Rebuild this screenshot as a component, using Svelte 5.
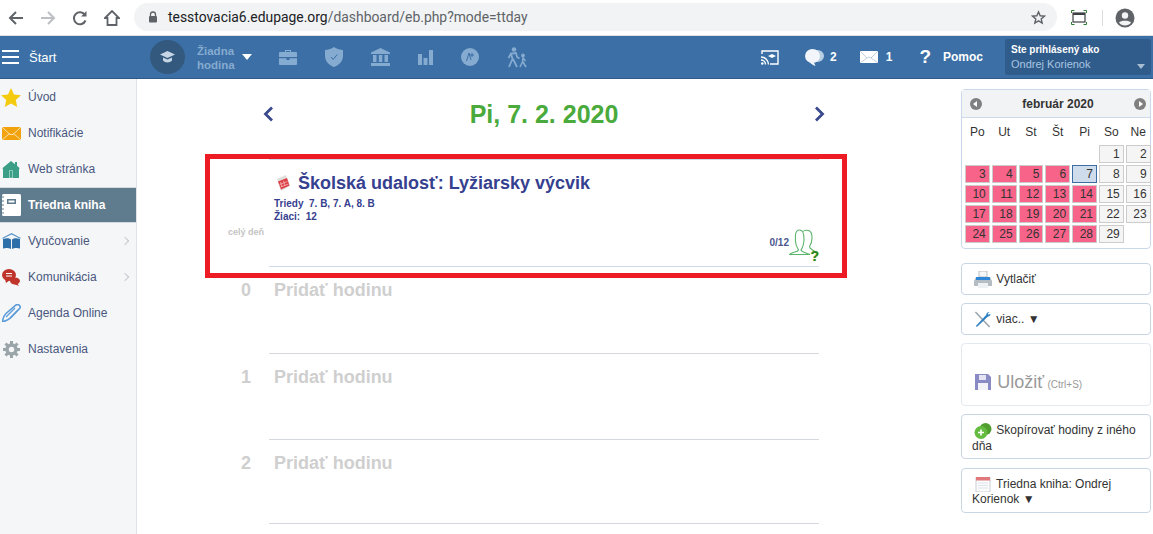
<script>
	const menu = [
		{ label: 'Úvod', icon: 'star' },
		{ label: 'Notifikácie', icon: 'mail' },
		{ label: 'Web stránka', icon: 'home' },
		{ label: 'Triedna kniha', icon: 'book', active: true },
		{ label: 'Vyučovanie', icon: 'school', more: true },
		{ label: 'Komunikácia', icon: 'chat', more: true },
		{ label: 'Agenda Online', icon: 'pen' },
		{ label: 'Nastavenia', icon: 'gear' }
	];
	const dayNames = ['Po', 'Ut', 'St', 'Št', 'Pi', 'So', 'Ne'];
	const days = Array.from({ length: 29 }, (_, i) => i + 1);
	const isWeekend = (d) => (d + 4) % 7 >= 5;
	const slots = ['0', '1', '2'];
</script>

<div class="chrome">
	<div class="nav-icons">
		<svg width="16" height="16" viewBox="0 0 16 16"><path d="M15 8H2M8 2L2 8l6 6" fill="none" stroke="#5f6368" stroke-width="2" /></svg>
		<svg width="16" height="16" viewBox="0 0 16 16"><path d="M1 8h13M8 2l6 6-6 6" fill="none" stroke="#bcbfc3" stroke-width="2" /></svg>
		<svg width="16" height="16" viewBox="0 0 16 16"><path d="M13.500 10.500A6 6 0 1 1 13 5" fill="none" stroke="#5f6368" stroke-width="2" /><path d="M14.500 1v5.500H9z" fill="#5f6368" /></svg>
		<svg width="16" height="16" viewBox="0 0 16 16"><path d="M1 8l7-7 7 7h-2.500v7h-9V8z" fill="none" stroke="#5f6368" stroke-width="1.800" /></svg>
	</div>
	<div class="omnibox">
		<svg class="lock" width="10" height="12" viewBox="0 0 10 12"><path d="M2.500 5V3.500a2.500 2.500 0 0 1 5 0V5" fill="none" stroke="#5f6368" stroke-width="1.300" /><rect x="1" y="5" width="8" height="6.500" rx="1" fill="#5f6368" /></svg>
		<span class="url"><b>tesstovacia6.edupage.org</b>/dashboard/eb.php?mode=ttday</span>
		<svg class="bookmark" width="15" height="15" viewBox="0 0 24 24"><path d="M12 3l2.700 6.200 6.700.6-5.100 4.400 1.600 6.600L12 17.300l-5.900 3.500 1.600-6.600-5.100-4.400 6.700-.6z" fill="none" stroke="#5f6368" stroke-width="2.200" /></svg>
	</div>
	<div class="chrome-end">
		<svg width="16" height="15" viewBox="0 0 16 15"><path d="M.5 3V.5h3M12.500.5h3V3M15.500 12v2.500h-3M3.500 14.500h-3V12" fill="none" stroke="#2e7d32" stroke-width="1" /><rect x="2" y="3" width="12" height="9" fill="none" stroke="#3c4043" stroke-width="1.200" /><rect x="2" y="3" width="12" height="2" fill="#3c4043" /></svg>
		<i class="sep"></i>
		<svg width="20" height="20" viewBox="0 0 20 20"><circle cx="10" cy="10" r="9.500" fill="#5f6368" /><circle cx="10" cy="7.500" r="3.200" fill="#f1f3f4" /><path d="M4 14.500c1.500-2.500 10.500-2.500 12 0-1.500 2.300-3.500 3-6 3s-4.500-.7-6-3z" fill="#f1f3f4" /></svg>
	</div>
</div>

<header class="topbar">
	<div class="start">
		<span class="burger"><i></i><i></i><i></i></span>
		<span>Štart</span>
	</div>
	<div class="lesson">
		<span class="lesson-badge">
			<svg width="15" height="12" viewBox="0 0 15 12"><path d="M7.500 0l7.500 3.500-7.500 3.500L0 3.500z" fill="#c6d6e6" /><path d="M3 6.500v3c2 2.500 7 2.500 9 0v-3L7.500 8.500z" fill="#c6d6e6" /></svg>
		</span>
		<span class="lesson-name">Žiadna<br />hodina</span>
		<span class="caret"></span>
	</div>
	<div class="tools">
		<svg width="18" height="16" viewBox="0 0 18 16"><path d="M6 3V1h6v2h5a1 1 0 0 1 1 1v4H0V4a1 1 0 0 1 1-1zM7.200 2v1h3.600V2zM0 9.200h7.500V11h3V9.200H18V15a1 1 0 0 1-1 1H1a1 1 0 0 1-1-1z" fill="#86abd0" /></svg>
		<svg width="18" height="20" viewBox="0 0 18 20"><path d="M9 0c2.500 1.800 5.500 2.800 9 3v6c0 5-3.800 9-9 11C3.800 18 0 14 0 9V3c3.500-.2 6.500-1.200 9-3z" fill="#86abd0" /><path d="M6 10l2.200 2.500 4-5" fill="none" stroke="#3b6fa5" stroke-width="1" /></svg>
		<svg width="19" height="18" viewBox="0 0 19 18"><path d="M9.500 0l9.500 4.500V6H0V4.500zM2 7h3.500v7H2zM7.800 7h3.500v7H7.800zM13.500 7H17v7h-3.500zM0 15h19v3H0z" fill="#86abd0" /></svg>
		<svg width="15" height="15" viewBox="0 0 15 15"><path d="M0 4h4v11H0zM5.500 8h4v7h-4zM11 0h4v15h-4z" fill="#86abd0" /></svg>
		<svg width="18" height="18" viewBox="0 0 18 18"><circle cx="9" cy="9" r="9" fill="#86abd0" /><path d="M5.500 13l2.500-8 2 7M11 5v4M9 7h4" fill="none" stroke="#3b6fa5" stroke-width="1" /></svg>
		<svg width="21" height="21" viewBox="0 0 21 21"><circle cx="7" cy="2.500" r="2.300" fill="#86abd0" /><circle cx="16" cy="8.500" r="1.900" fill="#86abd0" /><path d="M2 20l3.500-8L4 6.500l5-.5 1 4 2.500 1.500M6 12l4 8M4 6.500l-2.500 4.500" fill="none" stroke="#86abd0" stroke-width="1.800" /><path d="M13 20l2.500-5 .5-4 2.500 3M16 15l3 5" fill="none" stroke="#86abd0" stroke-width="1.600" /></svg>
	</div>
	<div class="actions">
		<svg class="cast" width="18" height="15" viewBox="0 0 18 15"><path d="M1 4V1h16v13H9" fill="none" stroke="#fff" stroke-width="1.400" /><path d="M0 7a7.500 7.500 0 0 1 7.500 7.500M0 10a4.500 4.500 0 0 1 4.500 4.500" fill="none" stroke="#fff" stroke-width="1.400" /><circle cx="1.300" cy="13.500" r="1.300" fill="#fff" /><path d="M11 4l4 2-4 2-4-2z" fill="#fff" /></svg>
		<span class="action chat">
			<svg width="19" height="17" viewBox="0 0 19 17"><ellipse cx="12.500" cy="7" rx="6.500" ry="6" fill="#b7cde2" /><ellipse cx="7.500" cy="7" rx="7.500" ry="7" fill="#f2f6fa" /><path d="M4 12l5 1.500 1.500 3.500-1-.2C7 15.500 5 14 4 12z" fill="#f2f6fa" /></svg>
			<b>2</b>
		</span>
		<span class="action msg">
			<svg width="18" height="12" viewBox="0 0 18 12"><rect width="18" height="12" fill="#fff" /><path d="M0 0l7 7 2-1 2 1 7-7M0 12l7-5M18 12l-7-5" fill="none" stroke="#a8bfd6" stroke-width=".7" /></svg>
			<b>1</b>
		</span>
		<span class="action help"><em>?</em><b>Pomoc</b></span>
	</div>
	<div class="user">
		<b>Ste prihlásený ako</b>
		<span>Ondrej Korienok</span>
		<i></i>
	</div>
</header>

<div class="page">
	<nav class="sidebar">
		{#each menu as item}
			<div class="item" class:active={item.active}>
				<span class="item-icon">
					{#if item.icon === 'star'}
						<svg width="20" height="19" viewBox="0 0 20 19"><path d="M10 0l3 6.500 7 .8-5.200 4.800 1.400 6.900L10 15.500 3.800 19l1.400-6.900L0 7.300l7-.8z" fill="#f5cb10" /></svg>
					{:else if item.icon === 'mail'}
						<svg width="19" height="13" viewBox="0 0 19 13"><rect width="19" height="13" fill="#f2a20c" /><path d="M0 0l8 7.500h3L19 0M0 13l7.500-6.500M19 13l-7.500-6.500" fill="none" stroke="#fff3d6" stroke-width=".8" /></svg>
					{:else if item.icon === 'home'}
						<svg width="18" height="17" viewBox="0 0 18 17"><path d="M9 0l4 3.200V1h2v3.800l3 2.700h-1V17H1V7.500H0z" fill="#3a9f86" /><path d="M7.500 9.500h3V17h-3z" fill="none" stroke="#9fd8c6" stroke-width=".8" /></svg>
					{:else if item.icon === 'book'}
						<svg width="20" height="22" viewBox="0 0 20 22"><rect x="1" width="19" height="22" rx="1.500" fill="#fff" /><rect x="6" y="5" width="9" height="5" fill="#5f7a8c" /><rect x="7.500" y="6.500" width="6" height="2" fill="#fff" /><path d="M0 3h3M0 7h3M0 11h3M0 15h3M0 19h3" stroke="#5f7a8c" stroke-width="1" /></svg>
					{:else if item.icon === 'school'}
						<svg width="19" height="17" viewBox="0 0 19 17"><path d="M9.500 0l9.500 5-.8.700L9.500 1.500.8 5.700 0 5z" fill="#5a96c8" /><path d="M1 6c3-1 6-1 8 .5V16c-2-1-5-1.500-8-.5zM18 6c-3-1-6-1-8 .5V16c2-1 5-1.500 8-.5z" fill="#2d6fa8" /></svg>
					{:else if item.icon === 'chat'}
						<svg width="18" height="17" viewBox="0 0 18 17"><ellipse cx="7" cy="6" rx="7" ry="6" fill="#c0352b" /><path d="M3 10l1 4 4-3z" fill="#c0352b" /><ellipse cx="13" cy="12" rx="5" ry="3.500" fill="#c0352b" /><path d="M15 14l2 3-5-2z" fill="#c0352b" /><path d="M4 4.500h6M4 7h6" stroke="#fff" stroke-width="1" /></svg>
					{:else if item.icon === 'pen'}
						<svg width="19" height="18" viewBox="0 0 19 18"><path d="M.5 18c.3-3 1.300-6.500 3.500-8.500L14 1c2-1.500 5 1 4 3l-9 9.500C7 15.500 4 17 .5 18z" fill="none" stroke="#5a9bd8" stroke-width="1.600" /><path d="M4 13l9-9M8 14l8-8" stroke="#5a9bd8" stroke-width="1.200" /></svg>
					{:else}
						<svg width="17" height="17" viewBox="0 0 17 17"><circle cx="8.500" cy="8.500" r="4.500" fill="none" stroke="#9aa5a9" stroke-width="3.500" /><path d="M8.500 0v3M8.500 14v3M0 8.500h3M14 8.500h3M2.500 2.500l2 2M12.500 12.500l2 2M2.500 14.500l2-2M12.500 4.500l2-2" stroke="#9aa5a9" stroke-width="3" /></svg>
					{/if}
				</span>
				<span>{item.label}</span>
				{#if item.more}<span class="chevron"></span>{/if}
			</div>
		{/each}
	</nav>

	<main class="day">
		<div class="day-head">
			<svg width="11" height="16" viewBox="0 0 11 16"><path d="M9 1.500L2.500 8 9 14.500" fill="none" stroke="#3a4a8c" stroke-width="2.800" /></svg>
			<h1>Pi, 7. 2. 2020</h1>
			<svg width="11" height="16" viewBox="0 0 11 16"><path d="M2 1.500L8.500 8 2 14.500" fill="none" stroke="#3a4a8c" stroke-width="2.800" /></svg>
		</div>

		<div class="event-row">
			<div class="when">celý deň</div>
			<div class="event">
				<h2>
					<svg width="15" height="16" viewBox="0 0 15 16"><path d="M1 4l9-4 4 11-9 5z" fill="#e2dedb" /><path d="M2 6.500l9-3.500 2.500 7.500L5 14.500z" fill="#dc3f44" /><path d="M4.500 7l1.500 5M7.500 5.800l1.500 5M3.500 9.500l8-3M4.500 12l8-3" stroke="#f6c4c4" stroke-width=".7" /></svg>
					<span>Školská udalosť: Lyžiarsky výcvik</span>
				</h2>
				<p>Triedy&nbsp; 7. B, 7. A, 8. B<br />Žiaci:&nbsp; 12</p>
				<div class="attendance">
					<span>0/12</span>
					<svg width="26" height="26" viewBox="0 0 26 26"><path d="M.5 25.500c2-2.500 8-2 9-4.500-2-3-3.500-6-3-11C6 5 7 1 10.500 1S15 5 15 10c0 4.500-1 8-3 11 1 2.500 6 3 9 4.500zM14 2.500c1-1.500 7-2.500 8.500 2 1 4.500 0 10-2 13 0 2.500 3 3 5 5" fill="none" stroke="#5cb56c" stroke-width="1.100" /></svg>
					<em>?</em>
				</div>
			</div>
		</div>

		<div class="slots">
			{#each slots as slot}
				<div class="slot">
					<div class="slot-no">{slot}</div>
					<div class="slot-add">Pridať hodinu</div>
				</div>
			{/each}
		</div>

		<div class="marker"></div>
	</main>

	<aside class="side">
		<section class="calendar">
			<div class="cal-head">
				<span class="cal-nav left"></span>
				<b>február 2020</b>
				<span class="cal-nav right"></span>
			</div>
			<div class="cal-grid names">
				{#each dayNames as d}<span>{d}</span>{/each}
			</div>
			<div class="cal-grid">
				<span class="gap"></span>
				{#each days as d}
					<span class="cell" class:free={isWeekend(d) || d === 29} class:today={d === 7}>{d}</span>
				{/each}
			</div>
		</section>

		<button class="btn short">
			<svg width="18" height="17" viewBox="0 0 18 17"><rect x="5" width="8" height="6" fill="#f4f6f8" stroke="#a0a8b0" stroke-width=".7" /><path d="M2 6h14l2 4v5H0v-5z" fill="#b4bcc4" /><rect x="2" y="6" width="14" height="3" fill="#2f86d6" /><rect x="4" y="12" width="10" height="5" fill="#eef1f4" /></svg>
			Vytlačiť
		</button>
		<button class="btn short">
			<svg width="18" height="17" viewBox="0 0 18 18"><path d="M1 1l15 16" stroke="#9aa4ac" stroke-width="1.600" /><path d="M16 1c-2 0-3.500 1-3.500 3L1.500 16l1 1L14 6c2 0 3-1.500 3-3l-2 1-1-1z" fill="#2f7fc0" /></svg>
			viac.. ▼
		</button>
		<button class="btn save">
			<svg width="16" height="16" viewBox="0 0 16 16"><path d="M0 0h13l3 3v13H0z" fill="#8a8ac4" /><rect x="4" y="1" width="7" height="5" fill="#e4e4f2" /><rect x="3" y="9" width="10" height="7" fill="#f2f2f8" /></svg>
			<span class="save-label">Uložiť</span> <small>(Ctrl+S)</small>
		</button>
		<button class="btn tall">
			<svg width="17" height="16" viewBox="0 0 17 16"><circle cx="11" cy="6" r="6" fill="#4f9e2f" /><circle cx="6.500" cy="9.500" r="6.500" fill="#63bb3f" /><path d="M6.500 6.500v6M3.500 9.500h6" stroke="#fff" stroke-width="1.600" /></svg>
			Skopírovať hodiny z iného dňa
		</button>
		<button class="btn tall">
			<svg width="14" height="15" viewBox="0 0 14 15"><rect width="14" height="15" fill="#fbfcfd" stroke="#c9ced4" /><rect width="14" height="3.500" fill="#e0787c" /><path d="M2 6h10M2 8.500h10M2 11h10" stroke="#dfe3e8" stroke-width="1" /></svg>
			Triedna kniha: Ondrej Korienok ▼
		</button>
	</aside>
</div>

<style>
	:global(body) {
		margin: 0;
		background: #fff;
		font-family: "Liberation Sans", Arial, sans-serif;
		overflow: hidden;
	}

	.chrome {
		height: 36px;
		display: flex;
		align-items: center;
		background: #fff;
		box-sizing: border-box;
		border-bottom: 1px solid #dfe1e5;
		padding-left: 8px;
	}

	.nav-icons {
		display: flex;
		gap: 16px;
		width: 126px;
		flex: none;
	}

	.omnibox {
		flex: 1;
		height: 28px;
		margin-top: -1px;
		background: #f1f3f4;
		border-radius: 14px;
		display: flex;
		align-items: center;
		padding: 0 11px 0 14px;
		font: 13.900px "Roboto", "Liberation Sans", sans-serif;
		color: #5f6368;
	}

	.url {
		margin-left: 10px;
		flex: 1;
	}

	.url b {
		font-weight: 400;
		color: #202124;
	}

	.chrome-end {
		display: flex;
		align-items: center;
		width: 96px;
		box-sizing: border-box;
		padding-left: 14px;
		flex: none;
	}

	.sep {
		width: 1px;
		height: 16px;
		background: #dadce0;
		margin: 0 12px 0 15px;
	}

	.topbar {
		height: 43px;
		background: #3b6fa5;
		border-bottom: 1px solid #2f5a88;
		box-sizing: border-box;
		display: flex;
		align-items: center;
		color: #fff;
		font-size: 13px;
	}

	.start {
		width: 135px;
		flex: none;
		display: flex;
		align-items: center;
		gap: 10px;
		padding-left: 2px;
		box-sizing: border-box;
	}

	.burger {
		display: flex;
		flex-direction: column;
		gap: 4px;
	}

	.burger i {
		display: block;
		width: 17px;
		height: 2px;
		background: #fff;
	}

	.lesson {
		display: flex;
		align-items: center;
		width: 115px;
		flex: none;
		margin-left: 15px;
		color: #86abd0;
		font-size: 11.500px;
		font-weight: 700;
		line-height: 14px;
	}

	.lesson-badge {
		width: 35px;
		height: 34px;
		border-radius: 50%;
		background: #34597f;
		display: flex;
		align-items: center;
		justify-content: center;
		margin-right: 12px;
		flex: none;
	}

	.lesson-name {
		margin-top: 2px;
	}

	.caret {
		border: 5px solid transparent;
		border-top: 6px solid #fff;
		border-bottom: 0;
		margin-left: 7px;
	}

	.tools {
		display: flex;
		align-items: center;
		gap: 28px;
		margin-left: 14px;
	}

	.actions {
		margin-left: auto;
		display: flex;
		align-items: center;
		font-size: 12px;
	}

	.action {
		display: flex;
		align-items: center;
		gap: 6px;
	}

	.chat {
		margin-left: 26px;
	}

	.msg {
		margin-left: 23px;
	}

	.msg svg {
		margin-right: 2px;
	}

	.help {
		margin-left: 27px;
		gap: 12px;
	}

	.help em {
		font-style: normal;
		font-weight: 700;
		font-size: 19px;
	}

	.user {
		position: relative;
		width: 146px;
		height: 36px;
		margin: 3px 2px 0 22px;
		align-self: flex-start;
		box-sizing: border-box;
		background: #2f5c8a;
		border-radius: 3px;
		padding: 5px 6px;
		display: flex;
		flex-direction: column;
		gap: 3px;
		font-size: 10px;
	}

	.user span {
		color: #a9c4e2;
		font-size: 11px;
	}

	.user i {
		position: absolute;
		right: 6px;
		bottom: 6px;
		border: 4px solid transparent;
		border-top: 5px solid #a9bdd2;
		border-bottom: 0;
	}

	.page {
		display: flex;
		height: 455px;
		overflow: hidden;
	}

	.sidebar {
		width: 137px;
		flex: none;
		box-sizing: border-box;
		background: #f5f6f8;
		border-right: 1px solid #dfe2e6;
		font-size: 12px;
		color: #49567e;
	}

	.item {
		height: 36px;
		display: flex;
		align-items: center;
		position: relative;
	}

	.item-icon {
		width: 28px;
		flex: none;
		display: flex;
		justify-content: center;
		padding-right: 6px;
		box-sizing: border-box;
	}

	.item.active {
		background: #5f7b8e;
		color: #fff;
		font-weight: 700;
		border-top: 1px solid #d5dade;
		border-bottom: 1px solid #d5dade;
		box-sizing: border-box;
	}

	.chevron {
		position: absolute;
		right: 8px;
		width: 5px;
		height: 5px;
		border-top: 1px solid #c5c9cd;
		border-right: 1px solid #c5c9cd;
		transform: rotate(45deg);
	}

	.day {
		position: relative;
		width: 824px;
		flex: none;
	}

	.day-head {
		width: 562px;
		margin: 21px 0 0 126px;
		height: 28px;
		display: flex;
		align-items: center;
		justify-content: space-between;
	}

	h1 {
		margin: 0;
		font-size: 25px;
		font-weight: 700;
		color: #4aaa3c;
		line-height: 28px;
	}

	.event-row,
	.slot {
		display: grid;
		grid-template-columns: 127px 550px;
		column-gap: 5px;
	}

	.event-row {
		margin-top: 31px;
		height: 108px;
	}

	.when {
		text-align: right;
		font-size: 9px;
		font-weight: 700;
		color: #c4c4c4;
		padding-top: 68px;
	}

	.event {
		position: relative;
		border-top: 1px solid #cdd9e8;
		border-bottom: 1px solid #cdd9e8;
		padding: 13px 0 0 5px;
		height: 93px;
	}

	h2 {
		margin: 0;
		display: flex;
		align-items: center;
		gap: 7px;
		padding-left: 2px;
		font-size: 18px;
		font-weight: 700;
		color: #35408f;
		line-height: 20px;
	}

	.event p {
		margin: 4px 0 0;
		font-size: 10px;
		font-weight: 700;
		color: #35408f;
		line-height: 13px;
	}

	.attendance {
		position: absolute;
		right: 4px;
		bottom: 11px;
		display: flex;
		align-items: center;
		font-size: 10px;
		font-weight: 700;
		color: #4b578e;
	}

	.attendance em {
		position: absolute;
		right: -4px;
		bottom: -8px;
		font-style: normal;
		font-size: 14px;
		line-height: 14px;
		color: #1e8a2a;
		text-shadow: 0 0 1px #b8a000;
	}

	.slot {
		height: 87px;
		box-sizing: border-box;
		font-size: 18px;
		font-weight: 700;
		color: #cfcfcf;
		padding-top: 13px;
		position: relative;
	}

	.slot:nth-child(2) {
		height: 86px;
	}

	.slot:nth-child(3) {
		height: 84px;
	}

	.slot::after {
		content: "";
		position: absolute;
		left: 132px;
		width: 550px;
		bottom: 0;
		height: 1px;
		background: #d5d9de;
	}

	.slot-no {
		text-align: right;
		padding-right: 13px;
	}

	.slot-add {
		padding-left: 5px;
	}

	.marker {
		position: absolute;
		left: 68px;
		top: 75px;
		width: 642px;
		height: 124px;
		box-sizing: border-box;
		border: 5px solid #ed1c24;
		pointer-events: none;
	}

	.side {
		width: 190px;
		flex: none;
		margin-top: 10px;
		display: flex;
		flex-direction: column;
		gap: 8px;
	}

	.calendar {
		height: 160px;
		box-sizing: border-box;
		border: 1px solid #c9d8ea;
		border-radius: 4px;
		margin-bottom: 6px;
		font-size: 12px;
		color: #333;
	}

	.cal-head {
		height: 27px;
		background: #f2f3f5;
		border-bottom: 1px solid #cdd9e8;
		display: flex;
		align-items: center;
		justify-content: space-between;
		padding: 0 4px 0 8px;
	}

	.cal-nav {
		width: 12px;
		height: 12px;
		border-radius: 50%;
		background: #808080;
		position: relative;
	}

	.cal-nav::after {
		content: "";
		position: absolute;
		top: 3px;
		border: 3px solid transparent;
	}

	.cal-nav.left::after {
		left: 0;
		border-right: 4px solid #fff;
	}

	.cal-nav.right::after {
		right: 0;
		border-left: 4px solid #fff;
	}

	.cal-grid {
		display: grid;
		grid-template-columns: repeat(7, 24.800px);
		column-gap: 2px;
		row-gap: 2px;
		padding-left: 3px;
		grid-auto-rows: 18px;
	}

	.names {
		height: 27px;
		align-items: center;
		grid-auto-rows: 27px;
		text-align: center;
	}

	.gap {
		grid-column: span 5;
	}

	.cell {
		box-sizing: border-box;
		background: #f8638a;
		border: 1px solid #ccc;
		text-align: right;
		padding-right: 3px;
		line-height: 16px;
		font-size: 12px;
	}

	.cell.free {
		background: #f5f5f5;
	}

	.cell.today {
		background: #cfdcec;
		border-color: #3a6ea5;
	}

	.btn {
		display: block;
		width: 100%;
		box-sizing: border-box;
		background: #fff;
		border: 1px solid #c9d6e6;
		border-radius: 4px;
		padding: 0 10px;
		text-align: left;
		font: 12px/15px "Liberation Sans", Arial, sans-serif;
		color: #333;
	}

	.btn svg {
		width: 18px;
		vertical-align: middle;
		margin: 0 1px 0 2px;
	}

	.short {
		height: 32px;
	}

	.save {
		height: 63px;
		padding-top: 18px;
		border-color: #e3e9f1;
		color: #999;
	}

	.save-label {
		font-size: 18px;
		vertical-align: middle;
		margin-left: 1px;
	}

	.save small {
		font-size: 10px;
		vertical-align: -3px;
	}

	.tall {
		height: 45px;
		padding-top: 3px;
	}

	.tall + .tall {
		margin-top: 1px;
	}
</style>
